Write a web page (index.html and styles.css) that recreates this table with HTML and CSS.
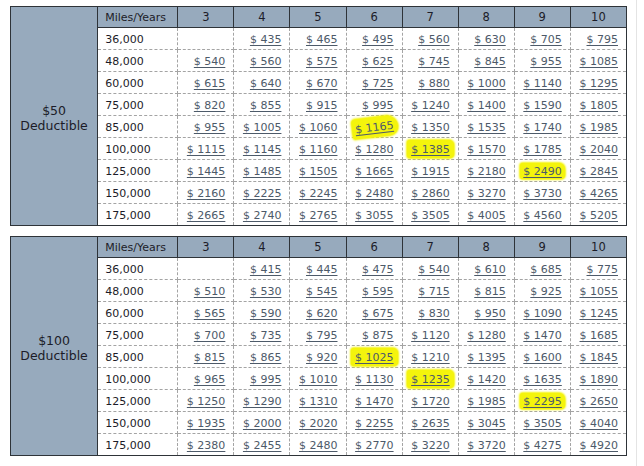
FILE: index.html
```html
<!DOCTYPE html>
<html>
<head>
<meta charset="utf-8">
<link rel="stylesheet" href="styles.css">
</head>
<body>
<div class="page">
<table class="rates">
<colgroup><col class="c-ded"><col class="c-miles"><col class="c-yr"><col class="c-yr"><col class="c-yr"><col class="c-yr"><col class="c-yr"><col class="c-yr"><col class="c-yr"><col class="c-yr"></colgroup>
<tr class="head"><td class="ded" rowspan="10">$50<br>Deductible</td><th class="mh">Miles/Years</th><th>3</th><th>4</th><th>5</th><th>6</th><th>7</th><th>8</th><th>9</th><th>10</th></tr>
<tr><td class="mi">36,000</td><td></td><td><a>$ 435</a></td><td><a>$ 465</a></td><td><a>$ 495</a></td><td><a>$ 560</a></td><td><a>$ 630</a></td><td><a>$ 705</a></td><td><a>$ 795</a></td></tr>
<tr><td class="mi">48,000</td><td><a>$ 540</a></td><td><a>$ 560</a></td><td><a>$ 575</a></td><td><a>$ 625</a></td><td><a>$ 745</a></td><td><a>$ 845</a></td><td><a>$ 955</a></td><td><a>$ 1085</a></td></tr>
<tr><td class="mi">60,000</td><td><a>$ 615</a></td><td><a>$ 640</a></td><td><a>$ 670</a></td><td><a>$ 725</a></td><td><a>$ 880</a></td><td><a>$ 1000</a></td><td><a>$ 1140</a></td><td><a>$ 1295</a></td></tr>
<tr><td class="mi">75,000</td><td><a>$ 820</a></td><td><a>$ 855</a></td><td><a>$ 915</a></td><td><a>$ 995</a></td><td><a>$ 1240</a></td><td><a>$ 1400</a></td><td><a>$ 1590</a></td><td><a>$ 1805</a></td></tr>
<tr><td class="mi">85,000</td><td><a>$ 955</a></td><td><a>$ 1005</a></td><td><a>$ 1060</a></td><td><a class="hl hl-a">$ 1165</a></td><td><a>$ 1350</a></td><td><a>$ 1535</a></td><td><a>$ 1740</a></td><td><a>$ 1985</a></td></tr>
<tr><td class="mi">100,000</td><td><a>$ 1115</a></td><td><a>$ 1145</a></td><td><a>$ 1160</a></td><td><a>$ 1280</a></td><td><a class="hl hl-b">$ 1385</a></td><td><a>$ 1570</a></td><td><a>$ 1785</a></td><td><a>$ 2040</a></td></tr>
<tr><td class="mi">125,000</td><td><a>$ 1445</a></td><td><a>$ 1485</a></td><td><a>$ 1505</a></td><td><a>$ 1665</a></td><td><a>$ 1915</a></td><td><a>$ 2180</a></td><td><a class="hl hl-c">$ 2490</a></td><td><a>$ 2845</a></td></tr>
<tr><td class="mi">150,000</td><td><a>$ 2160</a></td><td><a>$ 2225</a></td><td><a>$ 2245</a></td><td><a>$ 2480</a></td><td><a>$ 2860</a></td><td><a>$ 3270</a></td><td><a>$ 3730</a></td><td><a>$ 4265</a></td></tr>
<tr><td class="mi">175,000</td><td><a>$ 2665</a></td><td><a>$ 2740</a></td><td><a>$ 2765</a></td><td><a>$ 3055</a></td><td><a>$ 3505</a></td><td><a>$ 4005</a></td><td><a>$ 4560</a></td><td><a>$ 5205</a></td></tr>
</table>

<table class="rates">
<colgroup><col class="c-ded"><col class="c-miles"><col class="c-yr"><col class="c-yr"><col class="c-yr"><col class="c-yr"><col class="c-yr"><col class="c-yr"><col class="c-yr"><col class="c-yr"></colgroup>
<tr class="head"><td class="ded" rowspan="10">$100<br>Deductible</td><th class="mh">Miles/Years</th><th>3</th><th>4</th><th>5</th><th>6</th><th>7</th><th>8</th><th>9</th><th>10</th></tr>
<tr><td class="mi">36,000</td><td></td><td><a>$ 415</a></td><td><a>$ 445</a></td><td><a>$ 475</a></td><td><a>$ 540</a></td><td><a>$ 610</a></td><td><a>$ 685</a></td><td><a>$ 775</a></td></tr>
<tr><td class="mi">48,000</td><td><a>$ 510</a></td><td><a>$ 530</a></td><td><a>$ 545</a></td><td><a>$ 595</a></td><td><a>$ 715</a></td><td><a>$ 815</a></td><td><a>$ 925</a></td><td><a>$ 1055</a></td></tr>
<tr><td class="mi">60,000</td><td><a>$ 565</a></td><td><a>$ 590</a></td><td><a>$ 620</a></td><td><a>$ 675</a></td><td><a>$ 830</a></td><td><a>$ 950</a></td><td><a>$ 1090</a></td><td><a>$ 1245</a></td></tr>
<tr><td class="mi">75,000</td><td><a>$ 700</a></td><td><a>$ 735</a></td><td><a>$ 795</a></td><td><a>$ 875</a></td><td><a>$ 1120</a></td><td><a>$ 1280</a></td><td><a>$ 1470</a></td><td><a>$ 1685</a></td></tr>
<tr><td class="mi">85,000</td><td><a>$ 815</a></td><td><a>$ 865</a></td><td><a>$ 920</a></td><td><a class="hl hl-b">$ 1025</a></td><td><a>$ 1210</a></td><td><a>$ 1395</a></td><td><a>$ 1600</a></td><td><a>$ 1845</a></td></tr>
<tr><td class="mi">100,000</td><td><a>$ 965</a></td><td><a>$ 995</a></td><td><a>$ 1010</a></td><td><a>$ 1130</a></td><td><a class="hl hl-b">$ 1235</a></td><td><a>$ 1420</a></td><td><a>$ 1635</a></td><td><a>$ 1890</a></td></tr>
<tr><td class="mi">125,000</td><td><a>$ 1250</a></td><td><a>$ 1290</a></td><td><a>$ 1310</a></td><td><a>$ 1470</a></td><td><a>$ 1720</a></td><td><a>$ 1985</a></td><td><a class="hl hl-c">$ 2295</a></td><td><a>$ 2650</a></td></tr>
<tr><td class="mi">150,000</td><td><a>$ 1935</a></td><td><a>$ 2000</a></td><td><a>$ 2020</a></td><td><a>$ 2255</a></td><td><a>$ 2635</a></td><td><a>$ 3045</a></td><td><a>$ 3505</a></td><td><a>$ 4040</a></td></tr>
<tr><td class="mi">175,000</td><td><a>$ 2380</a></td><td><a>$ 2455</a></td><td><a>$ 2480</a></td><td><a>$ 2770</a></td><td><a>$ 3220</a></td><td><a>$ 3720</a></td><td><a>$ 4275</a></td><td><a>$ 4920</a></td></tr>
</table>
</div>
</body>
</html>
```
FILE: styles.css
```css
html, body {
  margin: 0;
  padding: 0;
  background: #fff;
}
body {
  font-family: "DejaVu Sans", Verdana, sans-serif;
  font-size: 11px;
  color: #1c1c28;
}
.page {
  box-sizing: border-box;
  width: 637px;
  height: 466px;
  padding: 6px 0 0 10px;
  border-right: 1px solid #e4e4e4;
  display: flex;
  flex-direction: column;
  gap: 10px;
}
.rates {
  border-collapse: collapse;
  table-layout: fixed;
  width: 617px;
  border: 1px solid #2e3338;
}
.c-ded { width: 87px; }
.c-miles { width: 80px; }
.c-yr { width: 56px; }
.rates th {
  background: #97aabd;
  font-weight: normal;
  height: 19px;
  line-height: 13px;
  padding: 1px 0 0;
  text-align: center;
  border: 1px solid #2e3338;
  color: #1c1c28;
  font-size: 11.5px;
}
.rates th.mh {
  text-align: left;
  padding-left: 7px;
  font-size: 11px;
}
.rates td {
  height: 19px;
  line-height: 13px;
  padding: 2px 8px 0 0;
  text-align: right;
  border: 1px dashed #a4a4a4;
  white-space: nowrap;
}
.rates td.mi {
  text-align: left;
  padding: 2px 0 0 7px;
}
.rates td.ded {
  background: #97aabd;
  text-align: center;
  padding: 3px 0 0;
  line-height: 15px;
  font-size: 12.5px;
  border: 1px solid #2e3338;
}
.rates a {
  color: #4d5a69;
  text-decoration: underline;
  text-underline-offset: 2px;
}
.hl {
  display: inline-block;
  background: #f4f40c;
  box-shadow: 0 0 2px 1px #f4f40c;
  border-radius: 5px;
  padding: 2px 3px;
  margin: -2px -3px;
}
.hl-a {
  border-radius: 4px 12px 9px 3px;
  padding: 4px 4px 3px 3px;
  margin: -4px -4px -3px -3px;
  transform: rotate(-7deg);
}
.hl-b {
  border-radius: 3px 5px 4px 3px;
  padding: 3px 4px 2px 4px;
  margin: -3px -4px -2px -4px;
}
.hl-c {
  border-radius: 3px 6px 4px 3px;
  padding: 2px 3px 1px 3px;
  margin: -2px -3px -1px -3px;
}
```
